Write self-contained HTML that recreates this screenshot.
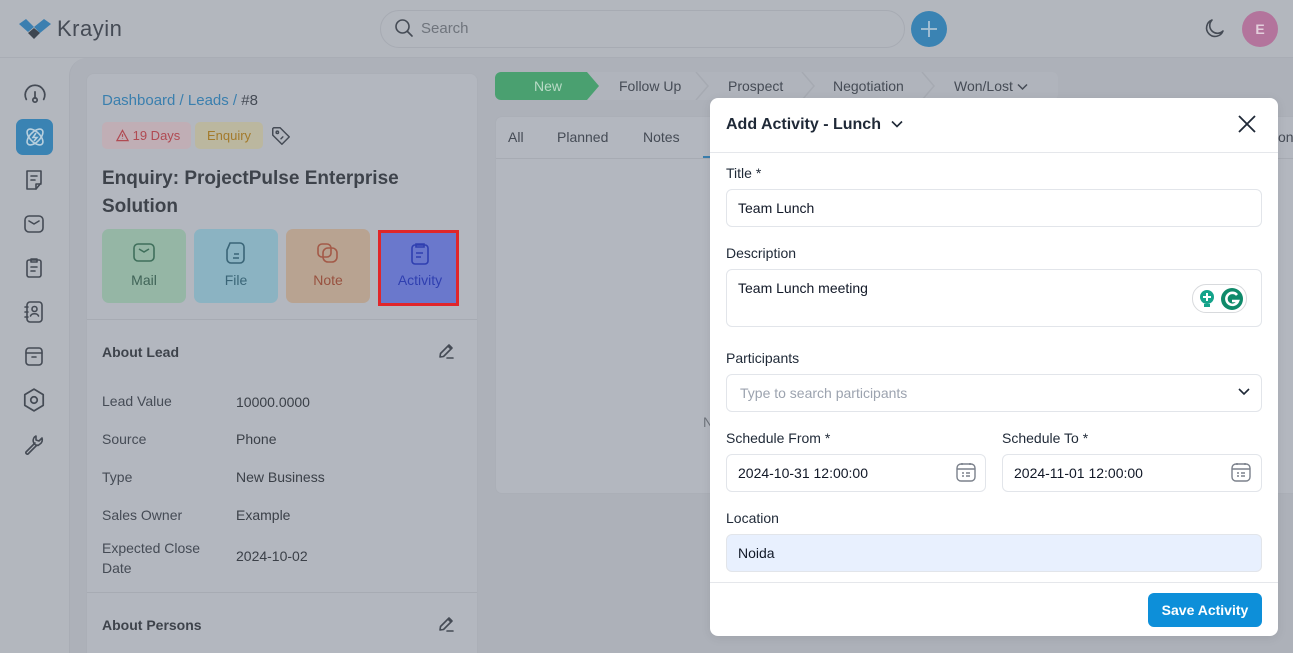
<!DOCTYPE html>
<html style="width:1293px;height:653px;overflow:hidden"><head><meta charset="utf-8"><style>
*{box-sizing:border-box;margin:0;padding:0}
body{width:1293px;height:653px;overflow:hidden;background:#b3b7be;font-family:"Liberation Sans",sans-serif;position:relative;color:#3b4048}
.abs{position:absolute}
svg{display:block}
.ic{fill:none;stroke:#454b55;stroke-width:1.6;stroke-linecap:round;stroke-linejoin:round}
.lbl{font-size:14px;color:#454b55}
.val{font-size:14px;color:#3b4048}
.m label{position:absolute;font-size:14px;color:#1f2937}
.inp{position:absolute;border:1px solid #e2e5ea;border-radius:6px;background:#fff;font-size:14px;color:#111827;padding-left:11px;display:flex;align-items:center}
</style></head><body>
<div class="abs" style="left:0;top:0;width:1293px;height:58px;border-bottom:1px solid #a9adb5"></div>
<svg class="abs" style="left:18px;top:18px" width="34" height="24" viewBox="0 0 34 24"><path d="M1 6 L8 1 L16 9 L10 14Z" fill="#3b7fb0"/><path d="M16 9 L26 1 L33 6 L22 15Z" fill="#3b7fb0"/><path d="M10 15 L16 10 L22 15 L16 21Z" fill="#3e4650"/></svg>
<div class="abs" style="left:57px;top:16px;font-size:22px;color:#454b55;letter-spacing:0.5px">Krayin</div>
<div class="abs" style="left:380px;top:10px;width:525px;height:38px;border:1px solid #a7abb3;border-radius:19px"></div>
<svg class="abs ic" style="left:394px;top:18px" width="20" height="20" viewBox="0 0 20 20"><circle cx="8.5" cy="8.5" r="6.5"/><path d="M13.5 13.5L18 18"/></svg>
<div class="abs" style="left:421px;top:20px;font-size:15px;color:#6f747c">Search</div>
<div class="abs" style="left:911px;top:11px;width:36px;height:36px;border-radius:50%;background:#3a83b3"></div>
<svg class="abs" style="left:917px;top:17px" width="24" height="24" viewBox="0 0 24 24"><path d="M12 4V20M4 12H20" stroke="#aac3d5" stroke-width="1.8"/></svg>
<svg class="abs ic" style="left:1202px;top:17px" width="24" height="24" viewBox="0 0 24 24"><path d="M10 3a8.5 8.5 0 1 0 11 11A7 7 0 0 1 10 3z"/></svg>
<div class="abs" style="left:1242px;top:11px;width:36px;height:36px;border-radius:50%;background:#b3749c;color:#e3cfdc;font-size:14px;font-weight:bold;text-align:center;line-height:36px">E</div>
<svg class="abs ic" style="left:22px;top:81px" width="26" height="26" viewBox="0 0 24 24"><path d="M4 17A9 9 0 1 1 20 17"/><path d="M12 10V16"/><circle cx="12" cy="17.5" r="2"/></svg>
<div class="abs" style="left:16px;top:119px;width:37px;height:36px;border-radius:7px;background:#3a83b3"></div>
<svg class="abs" style="left:23px;top:125px" width="24" height="24" viewBox="0 0 24 24" fill="none" stroke="#b9d0de" stroke-width="1.6"><ellipse cx="12" cy="12" rx="10" ry="5" transform="rotate(45 12 12)"/><ellipse cx="12" cy="12" rx="10" ry="5" transform="rotate(-45 12 12)"/><path d="M13 8L10 12.5H14L11 16"/></svg>
<svg class="abs ic" style="left:22px;top:168px" width="24" height="24" viewBox="0 0 24 24"><path d="M5 3H19V15L14 21H5Z"/><path d="M9 8H15M9 12H13"/><path d="M14 21V16H19"/></svg>
<svg class="abs ic" style="left:22px;top:212px" width="24" height="24" viewBox="0 0 24 24"><rect x="3" y="4" width="18" height="16" rx="4"/><path d="M7 9L12 12L17 9"/></svg>
<svg class="abs ic" style="left:22px;top:256px" width="24" height="24" viewBox="0 0 24 24"><rect x="5" y="4" width="14" height="17" rx="2"/><path d="M9 3H15V6H9Z M9 11H15M9 15H13"/></svg>
<svg class="abs ic" style="left:22px;top:299px" width="24" height="26" viewBox="0 0 24 26"><rect x="5" y="3" width="15" height="20" rx="3"/><circle cx="12.5" cy="10" r="2.5"/><path d="M8.5 17c1-3 7-3 8 0"/><path d="M3 8H6M3 13H6M3 18H6"/></svg>
<svg class="abs ic" style="left:22px;top:344px" width="24" height="24" viewBox="0 0 24 24"><rect x="4" y="4" width="16" height="17" rx="3"/><path d="M4 9H20M10 13H14"/></svg>
<svg class="abs ic" style="left:21px;top:387px" width="26" height="26" viewBox="0 0 24 24"><path d="M12 2L20.5 7V17L12 22L3.5 17V7Z"/><circle cx="12" cy="12" r="3"/></svg>
<svg class="abs ic" style="left:22px;top:432px" width="24" height="26" viewBox="0 0 24 24"><path d="M14 3a5 5 0 0 0 2 9.5L18 11A5 5 0 0 0 20 5L17 8L14 7L14 3Z"/><path d="M13 10L4 19a1.5 1.5 0 0 0 2 2L15 12"/></svg>
<div class="abs" style="left:69px;top:58px;width:1224px;height:595px;background:#adb1b9;border-top-left-radius:18px;border-left:1px solid #a9adb5"></div>
<div class="abs" style="left:86px;top:73px;width:392px;height:590px;background:#b3b7bf;border:1px solid #abafb7;border-radius:8px"></div>
<div class="abs" style="left:102px;top:92px;font-size:15px;color:#3a7fae">Dashboard / Leads / <span style="color:#454b55">#8</span></div>
<div class="abs" style="left:102px;top:122px;width:89px;height:27px;border-radius:5px;background:#c0aeb5;font-size:13px;color:#b04a52;line-height:27px;padding-left:14px">
<svg style="display:inline;vertical-align:-2px" width="13" height="13" viewBox="0 0 14 14" fill="none" stroke="#b04a52" stroke-width="1.3"><path d="M7 1.5L13 12.5H1Z M7 5.5V8.5M7 10V10.5"/></svg>&nbsp;19 Days</div>
<div class="abs" style="left:195px;top:122px;width:68px;height:27px;border-radius:5px;background:#bbb79f;font-size:13px;color:#a37a2b;line-height:27px;text-align:center">Enquiry</div>
<svg class="abs ic" style="left:270px;top:125px" width="22" height="22" viewBox="0 0 24 24"><path d="M3 4V11L13 21L21 13L11 3H4Z"/><circle cx="8" cy="8" r="1.3"/><path d="M12 15l2-2"/></svg>
<div class="abs" style="left:102px;top:165px;font-size:19px;font-weight:bold;color:#3e434b;line-height:28px;width:340px">Enquiry: ProjectPulse Enterprise Solution</div>
<div class="abs" style="left:102px;top:229px;width:84px;height:74px;border-radius:7px;background:#95b6a5"></div>
<svg class="abs" style="left:132px;top:242px" width="24" height="22" viewBox="0 0 24 22" fill="none" stroke="#3f6f5b" stroke-width="1.6"><rect x="2" y="2" width="20" height="17" rx="4"/><path d="M7 7L12 10L17 7"/></svg>
<div class="abs" style="left:102px;top:272px;width:84px;text-align:center;font-size:14px;color:#3f6357">Mail</div>
<div class="abs" style="left:194px;top:229px;width:84px;height:74px;border-radius:7px;background:#8bb3c2"></div>
<svg class="abs" style="left:225px;top:241px" width="22" height="24" viewBox="0 0 22 24" fill="none" stroke="#3a6577" stroke-width="1.6"><path d="M5 2H15a4 4 0 0 1 4 4V18a4 4 0 0 1-4 4H6a4 4 0 0 1-4-4V9L5 2Z"/><path d="M9 13H14M8 17H14"/></svg>
<div class="abs" style="left:194px;top:272px;width:84px;text-align:center;font-size:14px;color:#3a6577">File</div>
<div class="abs" style="left:286px;top:229px;width:84px;height:74px;border-radius:7px;background:#b8a391"></div>
<svg class="abs" style="left:316px;top:242px" width="24" height="22" viewBox="0 0 24 22" fill="none" stroke="#a35a48" stroke-width="1.6"><rect x="2" y="2" width="13" height="13" rx="4"/><rect x="7" y="6" width="14" height="14" rx="5"/></svg>
<div class="abs" style="left:286px;top:272px;width:84px;text-align:center;font-size:14px;color:#98513f">Note</div>
<div class="abs" style="left:378px;top:230px;width:81px;height:76px;background:#6a78cc;border:3px solid #e0262a"></div>
<svg class="abs" style="left:410px;top:242px" width="20" height="24" viewBox="0 0 20 24" fill="none" stroke="#2f3fb0" stroke-width="1.6"><rect x="2" y="3" width="16" height="19" rx="3"/><path d="M6 2H14V5H6Z M6 11H13M6 15H11"/></svg>
<div class="abs" style="left:378px;top:272px;width:84px;text-align:center;font-size:14px;color:#2f3fb0">Activity</div>
<div class="abs" style="left:87px;top:319px;width:390px;border-top:1px solid #a7abb3"></div>
<div class="abs" style="left:102px;top:344px;font-size:14px;font-weight:bold;color:#3e434b">About Lead</div>
<svg class="abs ic" style="left:437px;top:342px" width="18" height="18" viewBox="0 0 18 18"><path d="M3 15L3.5 11.5L12 3L15 6L6.5 14.5L3 15Z M11 4L14 7 M10 16H16"/></svg>
<div class="abs lbl" style="left:102px;top:393px">Lead Value</div><div class="abs val" style="left:236px;top:394px">10000.0000</div>
<div class="abs lbl" style="left:102px;top:431px">Source</div><div class="abs val" style="left:236px;top:431px">Phone</div>
<div class="abs lbl" style="left:102px;top:469px">Type</div><div class="abs val" style="left:236px;top:469px">New Business</div>
<div class="abs lbl" style="left:102px;top:507px">Sales Owner</div><div class="abs val" style="left:236px;top:507px">Example</div>
<div class="abs lbl" style="left:102px;top:538px;line-height:20px">Expected Close<br>Date</div><div class="abs val" style="left:236px;top:548px">2024-10-02</div>
<div class="abs" style="left:87px;top:592px;width:390px;border-top:1px solid #a7abb3"></div>
<div class="abs" style="left:102px;top:617px;font-size:14px;font-weight:bold;color:#3e434b">About Persons</div>
<svg class="abs ic" style="left:437px;top:615px" width="18" height="18" viewBox="0 0 18 18"><path d="M3 15L3.5 11.5L12 3L15 6L6.5 14.5L3 15Z M11 4L14 7 M10 16H16"/></svg>
<div class="abs" style="left:495px;top:72px;width:563px;height:28px;background:#b0b4bc;border-radius:6px"></div>
<svg class="abs" style="left:495px;top:72px" width="110" height="28"><path d="M6 0H92L104 14L92 28H6A6 6 0 0 1 0 22V6A6 6 0 0 1 6 0Z" fill="#4aa070"/></svg>
<svg class="abs" style="left:590px;top:72px" width="360" height="28" fill="none" stroke="#a6aab2" stroke-width="1.5"><path d="M106 0L118 14L106 28 M212 0L224 14L212 28 M332 0L344 14L332 28"/></svg>
<div class="abs" style="left:534px;top:78px;font-size:14px;color:#b9dbc6">New</div>
<div class="abs" style="left:619px;top:78px;font-size:14px;color:#454b55">Follow Up</div>
<div class="abs" style="left:728px;top:78px;font-size:14px;color:#454b55">Prospect</div>
<div class="abs" style="left:833px;top:78px;font-size:14px;color:#454b55">Negotiation</div>
<div class="abs" style="left:954px;top:78px;font-size:14px;color:#454b55">Won/Lost <svg style="display:inline;vertical-align:0" width="11" height="8" viewBox="0 0 11 8" fill="none" stroke="#454b55" stroke-width="1.5"><path d="M1 1.5L5.5 6L10 1.5"/></svg></div>
<div class="abs" style="left:495px;top:116px;width:810px;height:378px;background:#b3b7bf;border:1px solid #abafb7;border-radius:7px"></div>
<div class="abs" style="left:496px;top:158px;width:800px;border-top:1px solid #a7abb3"></div>
<div class="abs" style="left:508px;top:129px;font-size:14px;color:#454b55">All</div>
<div class="abs" style="left:557px;top:129px;font-size:14px;color:#454b55">Planned</div>
<div class="abs" style="left:643px;top:129px;font-size:14px;color:#454b55">Notes</div>
<div class="abs" style="left:703px;top:156px;width:10px;height:2px;background:#3a7fae"></div>
<div class="abs" style="left:1278px;top:129px;font-size:14px;color:#454b55">on</div>
<div class="abs" style="left:703px;top:414px;font-size:14px;color:#6f747c">N</div>
<div class="abs m" style="left:710px;top:98px;width:568px;height:538px;background:#fff;border-radius:8px;box-shadow:0 2px 10px rgba(0,0,0,.08)">
<div class="abs" style="left:16px;top:18px;font-size:16px;font-weight:bold;color:#1f2937">Add Activity - Lunch <svg style="display:inline;vertical-align:1px;margin-left:6px" width="12" height="8" viewBox="0 0 12 8" fill="none" stroke="#1f2937" stroke-width="1.6"><path d="M1 1.5L6 6.5L11 1.5"/></svg></div>
<svg class="abs" style="left:528px;top:17px" width="18" height="18" viewBox="0 0 18 18" stroke="#1f2937" stroke-width="1.8"><path d="M1 1L17 17M17 1L1 17"/></svg>
<div class="abs" style="left:0;top:54px;width:568px;border-top:1px solid #e5e7eb"></div>
<label style="left:16px;top:67px">Title *</label>
<div class="inp" style="left:16px;top:91px;width:536px;height:38px">Team Lunch</div>
<label style="left:16px;top:147px">Description</label>
<div class="inp" style="left:16px;top:171px;width:536px;height:58px;align-items:flex-start;padding-top:10px">Team Lunch meeting</div>
<div class="abs" style="left:482px;top:186px;width:55px;height:29px;border:1px solid #d8dadd;border-radius:14px;background:#fff"></div>
<svg class="abs" style="left:488px;top:190px" width="46" height="22" viewBox="0 0 46 22"><circle cx="9" cy="9" r="7" fill="#15a38a"/><path d="M9 5V13M5 9H13" stroke="#fff" stroke-width="2"/><rect x="6" y="16" width="6" height="3" fill="#15a38a"/><circle cx="34" cy="11" r="11" fill="#0f8a6a"/><path d="M39 7a6 6 0 1 0 1 6H34" fill="none" stroke="#fff" stroke-width="2.6"/></svg>
<label style="left:16px;top:252px">Participants</label>
<div class="inp" style="left:16px;top:276px;width:536px;height:38px;color:#9ca3af;padding-left:13px">Type to search participants</div>
<svg class="abs" style="left:527px;top:289px" width="14" height="10" viewBox="0 0 14 10" fill="none" stroke="#1f2937" stroke-width="1.6"><path d="M2 2L7 7L12 2"/></svg>
<label style="left:16px;top:332px">Schedule From *</label>
<label style="left:292px;top:332px">Schedule To *</label>
<div class="inp" style="left:16px;top:356px;width:260px;height:38px">2024-10-31 12:00:00</div>
<div class="inp" style="left:292px;top:356px;width:260px;height:38px">2024-11-01 12:00:00</div>
<svg class="abs" style="left:244px;top:362px" width="24" height="24" viewBox="0 0 24 24" fill="none" stroke="#7b818b" stroke-width="1.4"><rect x="3" y="4" width="18" height="17" rx="4"/><path d="M3 9H21M8 3V5M16 3V5M8 13H10M12 13H16M8 16H10M12 16H16"/></svg>
<svg class="abs" style="left:519px;top:362px" width="24" height="24" viewBox="0 0 24 24" fill="none" stroke="#7b818b" stroke-width="1.4"><rect x="3" y="4" width="18" height="17" rx="4"/><path d="M3 9H21M8 3V5M16 3V5M8 13H10M12 13H16M8 16H10M12 16H16"/></svg>
<label style="left:16px;top:412px">Location</label>
<div class="inp" style="left:16px;top:436px;width:536px;height:38px;background:#e8f0fe">Noida</div>
<div class="abs" style="left:0;top:484px;width:568px;border-top:1px solid #e5e7eb"></div>
<div class="abs" style="left:438px;top:495px;width:114px;height:34px;border-radius:6px;background:#0d8fd9;color:#fff;font-size:14px;font-weight:bold;text-align:center;line-height:34px">Save Activity</div>
</div>
</body></html>
